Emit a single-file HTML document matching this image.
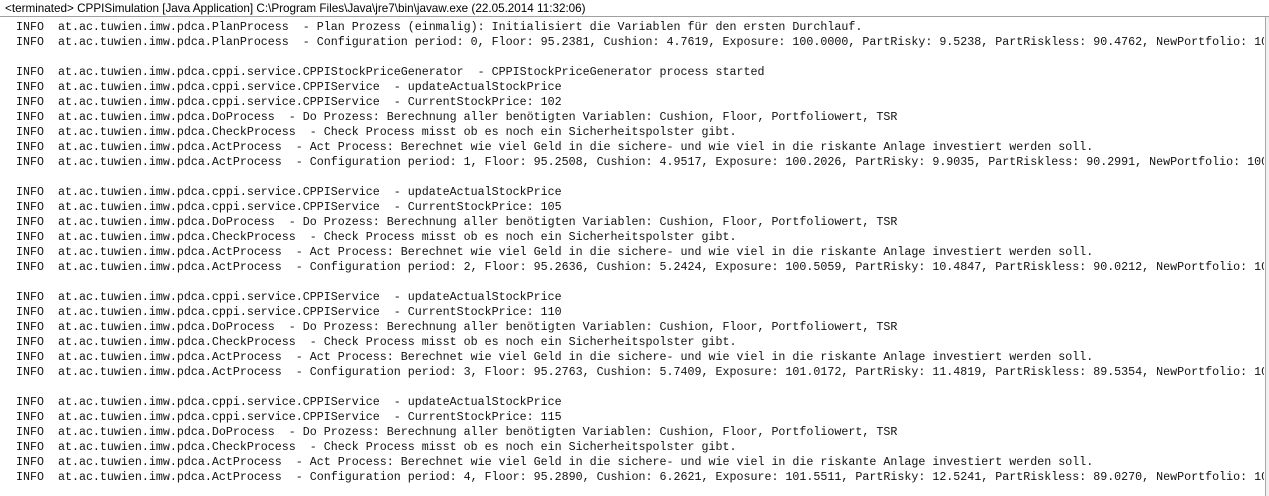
<!DOCTYPE html>
<html><head><meta charset="utf-8"><style>
html,body{margin:0;padding:0;background:#fff;width:1269px;height:496px;overflow:hidden}
.hdr{position:absolute;left:5px;top:2px;font:11.7px "Liberation Sans",sans-serif;color:#000;white-space:nowrap}
.line{position:absolute;left:0;top:16px;width:1269px;height:1px;background:#a0a0a0}
.sb{position:absolute;left:1265px;top:17px;width:4px;height:479px;background:#f0f0f0;border-left:1px solid #a8a8a8}
pre{position:absolute;left:2px;top:20px;margin:0;width:1262px;overflow:hidden;font:11.67px/15px "Liberation Mono",monospace;color:#111;white-space:pre}
</style></head><body>
<div class="hdr">&lt;terminated&gt; CPPISimulation [Java Application] C:\Program Files\Java\jre7\bin\javaw.exe (22.05.2014 11:32:06)</div>
<div class="line"></div>
<pre>  INFO  at.ac.tuwien.imw.pdca.PlanProcess  - Plan Prozess (einmalig): Initialisiert die Variablen für den ersten Durchlauf.
  INFO  at.ac.tuwien.imw.pdca.PlanProcess  - Configuration period: 0, Floor: 95.2381, Cushion: 4.7619, Exposure: 100.0000, PartRisky: 9.5238, PartRiskless: 90.4762, NewPortfolio: 100.0000

  INFO  at.ac.tuwien.imw.pdca.cppi.service.CPPIStockPriceGenerator  - CPPIStockPriceGenerator process started
  INFO  at.ac.tuwien.imw.pdca.cppi.service.CPPIService  - updateActualStockPrice
  INFO  at.ac.tuwien.imw.pdca.cppi.service.CPPIService  - CurrentStockPrice: 102
  INFO  at.ac.tuwien.imw.pdca.DoProcess  - Do Prozess: Berechnung aller benötigten Variablen: Cushion, Floor, Portfoliowert, TSR
  INFO  at.ac.tuwien.imw.pdca.CheckProcess  - Check Process misst ob es noch ein Sicherheitspolster gibt.
  INFO  at.ac.tuwien.imw.pdca.ActProcess  - Act Process: Berechnet wie viel Geld in die sichere- und wie viel in die riskante Anlage investiert werden soll.
  INFO  at.ac.tuwien.imw.pdca.ActProcess  - Configuration period: 1, Floor: 95.2508, Cushion: 4.9517, Exposure: 100.2026, PartRisky: 9.9035, PartRiskless: 90.2991, NewPortfolio: 100.2026

  INFO  at.ac.tuwien.imw.pdca.cppi.service.CPPIService  - updateActualStockPrice
  INFO  at.ac.tuwien.imw.pdca.cppi.service.CPPIService  - CurrentStockPrice: 105
  INFO  at.ac.tuwien.imw.pdca.DoProcess  - Do Prozess: Berechnung aller benötigten Variablen: Cushion, Floor, Portfoliowert, TSR
  INFO  at.ac.tuwien.imw.pdca.CheckProcess  - Check Process misst ob es noch ein Sicherheitspolster gibt.
  INFO  at.ac.tuwien.imw.pdca.ActProcess  - Act Process: Berechnet wie viel Geld in die sichere- und wie viel in die riskante Anlage investiert werden soll.
  INFO  at.ac.tuwien.imw.pdca.ActProcess  - Configuration period: 2, Floor: 95.2636, Cushion: 5.2424, Exposure: 100.5059, PartRisky: 10.4847, PartRiskless: 90.0212, NewPortfolio: 100.5059

  INFO  at.ac.tuwien.imw.pdca.cppi.service.CPPIService  - updateActualStockPrice
  INFO  at.ac.tuwien.imw.pdca.cppi.service.CPPIService  - CurrentStockPrice: 110
  INFO  at.ac.tuwien.imw.pdca.DoProcess  - Do Prozess: Berechnung aller benötigten Variablen: Cushion, Floor, Portfoliowert, TSR
  INFO  at.ac.tuwien.imw.pdca.CheckProcess  - Check Process misst ob es noch ein Sicherheitspolster gibt.
  INFO  at.ac.tuwien.imw.pdca.ActProcess  - Act Process: Berechnet wie viel Geld in die sichere- und wie viel in die riskante Anlage investiert werden soll.
  INFO  at.ac.tuwien.imw.pdca.ActProcess  - Configuration period: 3, Floor: 95.2763, Cushion: 5.7409, Exposure: 101.0172, PartRisky: 11.4819, PartRiskless: 89.5354, NewPortfolio: 101.0172

  INFO  at.ac.tuwien.imw.pdca.cppi.service.CPPIService  - updateActualStockPrice
  INFO  at.ac.tuwien.imw.pdca.cppi.service.CPPIService  - CurrentStockPrice: 115
  INFO  at.ac.tuwien.imw.pdca.DoProcess  - Do Prozess: Berechnung aller benötigten Variablen: Cushion, Floor, Portfoliowert, TSR
  INFO  at.ac.tuwien.imw.pdca.CheckProcess  - Check Process misst ob es noch ein Sicherheitspolster gibt.
  INFO  at.ac.tuwien.imw.pdca.ActProcess  - Act Process: Berechnet wie viel Geld in die sichere- und wie viel in die riskante Anlage investiert werden soll.
  INFO  at.ac.tuwien.imw.pdca.ActProcess  - Configuration period: 4, Floor: 95.2890, Cushion: 6.2621, Exposure: 101.5511, PartRisky: 12.5241, PartRiskless: 89.0270, NewPortfolio: 101.5511</pre>
<div class="sb"></div>
</body></html>
